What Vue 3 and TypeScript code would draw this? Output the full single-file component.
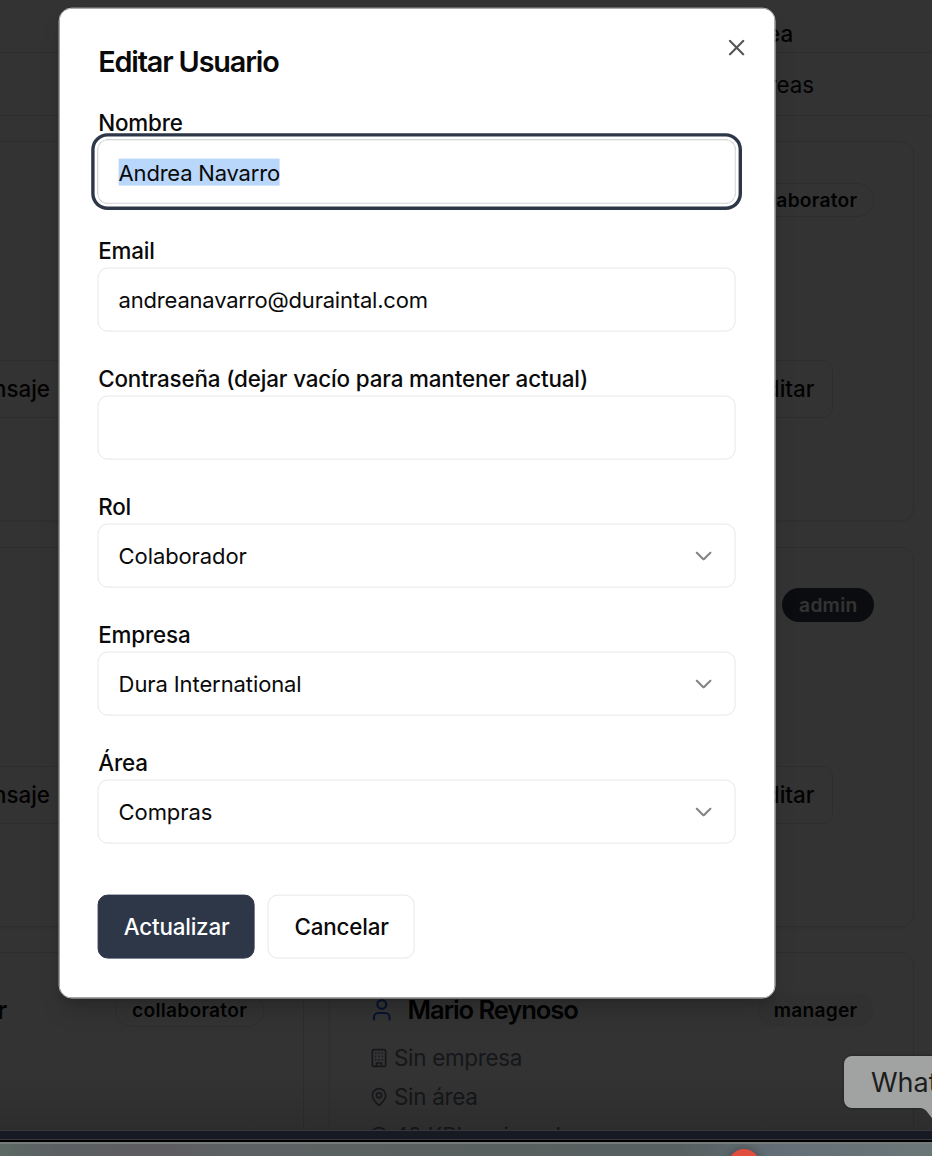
<script setup lang="ts">
interface Field {
  id: string
  label: string
  value: string
  kind: 'input' | 'select'
  focused?: boolean
}

interface UserCard {
  id: number
  name: string
  role: string
  tone: 'outline' | 'dark' | 'soft'
  details: boolean
}

const fields: Field[] = [
  { id: 'nombre', label: 'Nombre', value: 'Andrea Navarro', kind: 'input', focused: true },
  { id: 'email', label: 'Email', value: 'andreanavarro@duraintal.com', kind: 'input' },
  { id: 'clave', label: 'Contraseña (dejar vacío para mantener actual)', value: '', kind: 'input' },
  { id: 'rol', label: 'Rol', value: 'Colaborador', kind: 'select' },
  { id: 'empresa', label: 'Empresa', value: 'Dura International', kind: 'select' },
  { id: 'area', label: 'Área', value: 'Compras', kind: 'select' },
]

const cards: UserCard[] = [
  { id: 1, name: '', role: '', tone: 'outline', details: false },
  { id: 2, name: '', role: 'collaborator', tone: 'outline', details: false },
  { id: 3, name: '', role: '', tone: 'outline', details: false },
  { id: 4, name: '', role: 'admin', tone: 'dark', details: false },
  { id: 5, name: 'r', role: 'collaborator', tone: 'outline', details: false },
  { id: 6, name: 'Mario Reynoso', role: 'manager', tone: 'soft', details: true },
]
</script>

<template>
  <div class="screen">
    <div class="page">
      <header class="bar bar-top"><span>Área</span></header>
      <div class="bar bar-sub"><span>Áreas</span></div>
      <main class="grid">
        <article v-for="card in cards" :key="card.id" class="card">
          <div class="card-head" :class="{ partial: card.name === 'r' }">
            <svg v-if="card.details" class="user" viewBox="0 0 24 24" fill="none" stroke="currentColor" stroke-width="2" stroke-linecap="round" stroke-linejoin="round">
              <path d="M19.3 21v-2a4 4 0 0 0-4-4H8.7a4 4 0 0 0-4 4v2" />
              <circle cx="12" cy="7" r="4.1" />
            </svg>
            <h3>{{ card.name }}</h3>
            <span v-if="card.role" class="badge" :class="card.tone">{{ card.role }}</span>
          </div>
          <div v-if="card.details" class="details">
            <p>
              <svg viewBox="0 0 24 24" fill="none" stroke="currentColor" stroke-width="2" stroke-linecap="round" stroke-linejoin="round">
                <rect x="4" y="2" width="16" height="20" rx="2" />
                <path d="M9 22v-4h6v4M8 6h.01M12 6h.01M16 6h.01M8 10h.01M12 10h.01M16 10h.01M8 14h.01M12 14h.01M16 14h.01" />
              </svg>
              <span>Sin empresa</span>
            </p>
            <p>
              <svg viewBox="0 0 24 24" fill="none" stroke="currentColor" stroke-width="2" stroke-linecap="round" stroke-linejoin="round">
                <path d="M20 10c0 4.993-5.539 10.193-7.399 11.799a1 1 0 0 1-1.202 0C9.539 20.193 4 14.993 4 10a8 8 0 0 1 16 0" />
                <circle cx="12" cy="10" r="3" />
              </svg>
              <span>Sin área</span>
            </p>
            <p>
              <svg viewBox="0 0 24 24" fill="none" stroke="currentColor" stroke-width="2">
                <circle cx="12" cy="12" r="10" />
                <circle cx="12" cy="12" r="6" />
                <circle cx="12" cy="12" r="2" />
              </svg>
              <span>42 KPIs asignados</span>
            </p>
          </div>
          <div v-else class="card-actions">
            <span class="action message">Mensaje</span>
            <span class="action edit">Editar</span>
          </div>
        </article>
      </main>
    </div>

    <div class="overlay"></div>

    <div class="desktop">
      <div class="window-edge"></div>
      <div class="gap-line"></div>
      <div class="dock"><i class="notice"></i></div>
    </div>

    <div class="tooltip">
      <span>WhatsApp</span>
      <svg class="tail" viewBox="0 0 24 14"><path d="M0 0C6 0 8 2 10 5L17 14H24V0Z" /></svg>
    </div>

    <section class="modal" role="dialog" aria-label="Editar Usuario">
      <svg class="close" viewBox="0 0 16 16" fill="none" stroke="currentColor" stroke-width="2.1" stroke-linecap="round">
        <path d="M1.2 1.2l13.6 13.6M14.8 1.2L1.2 14.8" />
      </svg>
      <h2>Editar Usuario</h2>
      <form>
        <div v-for="field in fields" :key="field.id" class="field">
          <label>{{ field.label }}</label>
          <div class="control" :class="{ focused: field.focused }">
            <span class="value" :class="[field.kind, { selected: field.focused }]">{{ field.value }}</span>
            <svg v-if="field.kind === 'select'" class="chevron" viewBox="0 0 16 9" fill="none" stroke="currentColor" stroke-width="2.1" stroke-linecap="round" stroke-linejoin="round">
              <path d="M1 1l7 7 7-7" />
            </svg>
          </div>
        </div>
        <div class="buttons">
          <button type="button" class="primary"><span>Actualizar</span></button>
          <button type="button" class="secondary"><span>Cancelar</span></button>
        </div>
      </form>
    </section>
  </div>
</template>

<style>
body {
  overflow: hidden;
}
</style>

<style scoped>
* {
  box-sizing: border-box;
}
.screen {
  position: relative;
  width: 932px;
  height: 1156px;
  overflow: hidden;
  font-family: Inter, 'Liberation Sans', sans-serif;
  font-size: 22.4px;
  color: #0a0a0a;
}
.page {
  height: 1130px;
  overflow: hidden;
  background: #fff;
}
.bar {
  display: flex;
  align-items: center;
  border-bottom: 1px solid #e5e5e5;
  font-weight: 500;
}
.bar-top {
  height: 53px;
  padding: 15px 0 0 743px;
}
.bar-sub {
  height: 63px;
  font-weight: 400;
  padding: 1px 0 0 753px;
  letter-spacing: 0;
}
.grid {
  display: grid;
  grid-template-columns: 584px 585px;
  grid-auto-rows: 380px;
  column-gap: 25.4px;
  row-gap: 25.5px;
  margin: 25px 0 0 -280px;
}
.card {
  padding: 40px 39px;
  border: 1px solid #e3e3e3;
  border-radius: 13px;
  box-shadow: 0 2px 3px #0000000d;
}
.card-head {
  height: 35px;
  display: flex;
  align-items: center;
}
.card:nth-child(n + 5) .card-head {
  height: 34px;
}
.card-head.partial {
  padding-left: 237px;
}
.card-head h3 {
  margin: 0;
  font-size: 25.6px;
  line-height: 34px;
  font-weight: 600;
  letter-spacing: -1.1px;
}
.user {
  width: 25.6px;
  height: 25.6px;
  margin-right: 12.6px;
  color: #2563eb;
}
.badge {
  height: 34px;
  margin-left: auto;
  padding: 0 16px;
  border: 1px solid transparent;
  border-radius: 17px;
  display: flex;
  align-items: center;
  font-size: 19.2px;
  font-weight: 600;
  letter-spacing: 0.25px;
}
.badge.outline {
  border-color: #e2e2e2;
}
.badge.dark {
  background: #333a4c;
  color: #fff;
}
.badge.soft {
  background: #f5f5f5;
}
.details {
  margin-top: 11px;
  color: #6b7280;
  letter-spacing: -0.27px;
}
.details p {
  height: 39px;
  margin: 0;
  display: flex;
  align-items: center;
  gap: 5px;
}
.details svg {
  width: 20px;
  height: 20px;
  margin-left: -0.5px;
}
.card-actions {
  margin-top: 143px;
  display: flex;
  justify-content: space-between;
  font-weight: 500;
}
.action {
  height: 58px;
  padding-bottom: 1px;
  border: 1px solid #e3e3e3;
  border-radius: 10px;
  display: flex;
  align-items: center;
  justify-content: flex-end;
}
.message {
  width: 350px;
  padding-right: 59px;
}
.edit {
  width: 110px;
  margin-right: 41px;
  padding-right: 18px;
}
.overlay {
  position: absolute;
  inset: 0 0 26px;
  background: linear-gradient(#000c 0, #000c 1075px, #000000d2 1130px);
}
.desktop {
  position: relative;
  height: 26px;
  background: #000;
}
.window-edge {
  height: 10px;
  background: #171a23;
  border-top: 1px solid #363640;
  border-bottom: 1px solid #37383b;
}
.gap-line {
  height: 2px;
  background: #000;
}
.dock {
  height: 14px;
  overflow: hidden;
  border-top: 2px solid #747c7b;
  background: linear-gradient(90deg, #5b6964 0, #5b5f62 55px, #5d5c61 160px, #5c6263 250px, #59605f 410px, #566060 680px, #636e77 780px, #6b7777 932px);
}
.notice {
  display: block;
  width: 32px;
  height: 32px;
  margin: 5px 0 0 728px;
  border-radius: 50%;
  background: #df4e3f;
  box-shadow: 0 0 8px #0005;
}
.tooltip {
  position: absolute;
  left: 844px;
  top: 1056px;
  width: 110px;
  height: 52px;
  padding-left: 27px;
  border-radius: 8px;
  background: #a1a3a2;
  color: #1b1d1c;
  display: flex;
  align-items: center;
  font-size: 27px;
  box-shadow: 0 0 3px #0007;
}
.tail {
  position: absolute;
  left: 74px;
  top: 51.5px;
  width: 24px;
  height: 14px;
  fill: #a1a3a2;
}
.modal {
  position: absolute;
  left: 59px;
  top: 8px;
  width: 717px;
  height: 991px;
  padding: 38px 39px 39px 38px;
  border: 1px solid #b5b8b8;
  border-radius: 13px;
  background: #fff;
  background-clip: padding-box;
  box-shadow: 0 16px 24px -6px #0000002e, 0 6px 10px -6px #0000002e;
  transform: translate(-0.4px, -0.4px);
}
.close {
  position: absolute;
  left: 669px;
  top: 31px;
  width: 16px;
  height: 16px;
  color: #555;
}
.modal h2 {
  height: 32px;
  margin: 0;
  padding-left: 0.6px;
  line-height: 30px;
  font-size: 28.8px;
  font-weight: 600;
  letter-spacing: -1.15px;
}
form {
  padding-top: 25px;
}
.field {
  height: 128px;
}
.field label {
  display: block;
  height: 36px;
  padding-left: 0.6px;
  line-height: 38px;
  font-weight: 500;
  letter-spacing: -0.15px;
  white-space: nowrap;
}
.control {
  height: 64px;
  padding: 0 23px 0 20px;
  border: 1px solid #e7e7e7;
  border-radius: 10px;
  display: flex;
  align-items: center;
  justify-content: space-between;
}
.control.focused {
  box-shadow: 0 0 0 3px #fff, 0 0 0 6.4px #2d3748;
}
.value {
  line-height: 27px;
  padding-top: 1px;
  font-size: 22px;
}
.value.input {
  letter-spacing: -0.2px;
}
.value.select {
  letter-spacing: -0.1px;
}
.value.selected {
  height: 27px;
  padding: 0;
  line-height: 29px;
  background: #b9d6fb;
}
.chevron {
  width: 16px;
  height: 9px;
  color: #848484;
}
.buttons {
  display: flex;
  gap: 13px;
  margin-top: 23px;
}
.buttons button {
  height: 64px;
  padding: 0 0 1px 1px;
  border: 1px solid #e7e7e7;
  border-radius: 10px;
  font: 500 22.4px Inter, 'Liberation Sans', sans-serif;
  letter-spacing: -0.2px;
}
.primary {
  width: 157px;
  background: #2d3748;
  color: #fff;
}
.buttons .primary {
  border-color: #2d3748;
}
.secondary {
  width: 147px;
  background: #fff;
  color: #0a0a0a;
}
</style>
